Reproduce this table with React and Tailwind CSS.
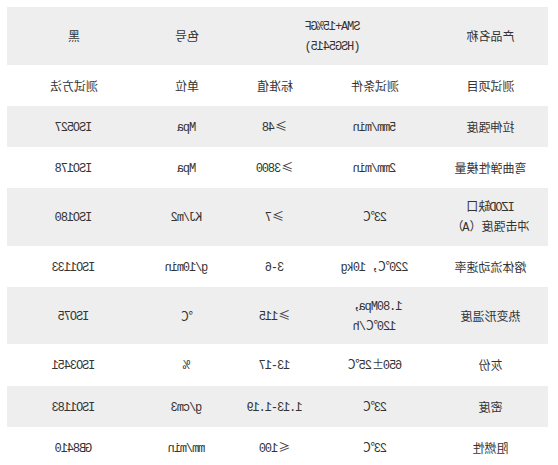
import React from 'react';

// the screenshot is a mirrored copy of the page, so the whole sheet is flipped at the end
const COLS = ['w-[115px]', 'w-[116px]', 'w-[84px]', 'w-[92px]', 'w-[134px]'];

const ROWS = [
  { h: 'h-[41px]', bg: 'bg-white', cells: ['测试项目', '测试条件', '标准值', '单位', '测试方法'] },
  { h: 'h-[41px]', bg: 'bg-[#eeeeee]', cells: ['拉伸强度', '5mm/min', '≥48', 'Mpa', 'ISO527'] },
  { h: 'h-[41px]', bg: 'bg-white', cells: ['弯曲弹性模量', '2mm/min', '≥3800', 'Mpa', 'ISO178'] },
  { h: 'h-[58px]', bg: 'bg-[#eeeeee]', cells: [['IZOD缺口', '冲击强度（A）'], '23℃', '≥7', 'KJ/m2', 'ISO180'] },
  { h: 'h-[41px]', bg: 'bg-white', cells: ['熔体流动速率', '220℃，10kg', '3-6', 'g/10min', 'ISO1133'] },
  { h: 'h-[57px]', bg: 'bg-[#eeeeee]', cells: ['热变形温度', ['1.80Mpa，', '120℃/h'], '≥115', '℃', 'ISO75'] },
  { h: 'h-[42px]', bg: 'bg-white', cells: ['灰份', '650±25℃', '13-17', '%', 'ISO3451'] },
  { h: 'h-[41px]', bg: 'bg-[#eeeeee]', cells: ['密度', '23℃', '1.13-1.19', 'g/cm3', 'ISO1183'] },
  { h: 'h-[41px]', bg: 'bg-white', cells: ['阻燃性', '23℃', '≤100', 'mm/min', 'GB8410'] },
];

// latin runs are narrower in the original (half-width glyphs)
function T({ text }) {
  const parts = text.split(/([\x20-\x7e]+)/).filter(Boolean);
  return (
    <>
      {parts.map((p, i) =>
        /^[\x20-\x7e]+$/.test(p) ? (
          <span key={i} className="font-['Liberation_Mono',monospace] tracking-[-1.1px]">{p}</span>
        ) : (
          <span key={i}>{p}</span>
        )
      )}
    </>
  );
}

function Cell({ value, colSpan }) {
  const lines = Array.isArray(value) ? value : [value];
  return (
    <td colSpan={colSpan} className="text-center align-middle p-0">
      {lines.map((l, i) => (
        <div key={i}><T text={l} /></div>
      ))}
    </td>
  );
}

export default function App() {
  return (
    <div className="w-[558px] h-[465px] overflow-hidden bg-white">
      <div className="-scale-x-100 pl-[10px] pr-[7px] pt-[7px]">
        <table className="w-[541px] table-fixed border-collapse text-[12px] leading-[18px] text-[#333] font-['Noto_Sans_CJK_SC',sans-serif]">
          <colgroup>
            {COLS.map((c, i) => <col key={i} className={c} />)}
          </colgroup>
          <tbody>
            <tr className="h-[58px] bg-[#eeeeee]">
              <Cell value="产品名称" />
              <Cell value={['SMA+15%GF', '(HSG5415)']} colSpan={2} />
              <Cell value="色号" />
              <Cell value="黑" />
            </tr>
            {ROWS.map((r, i) => (
              <tr key={i} className={`${r.h} ${r.bg}`}>
                {r.cells.map((c, j) => <Cell key={j} value={c} />)}
              </tr>
            ))}
          </tbody>
        </table>
      </div>
    </div>
  );
}
